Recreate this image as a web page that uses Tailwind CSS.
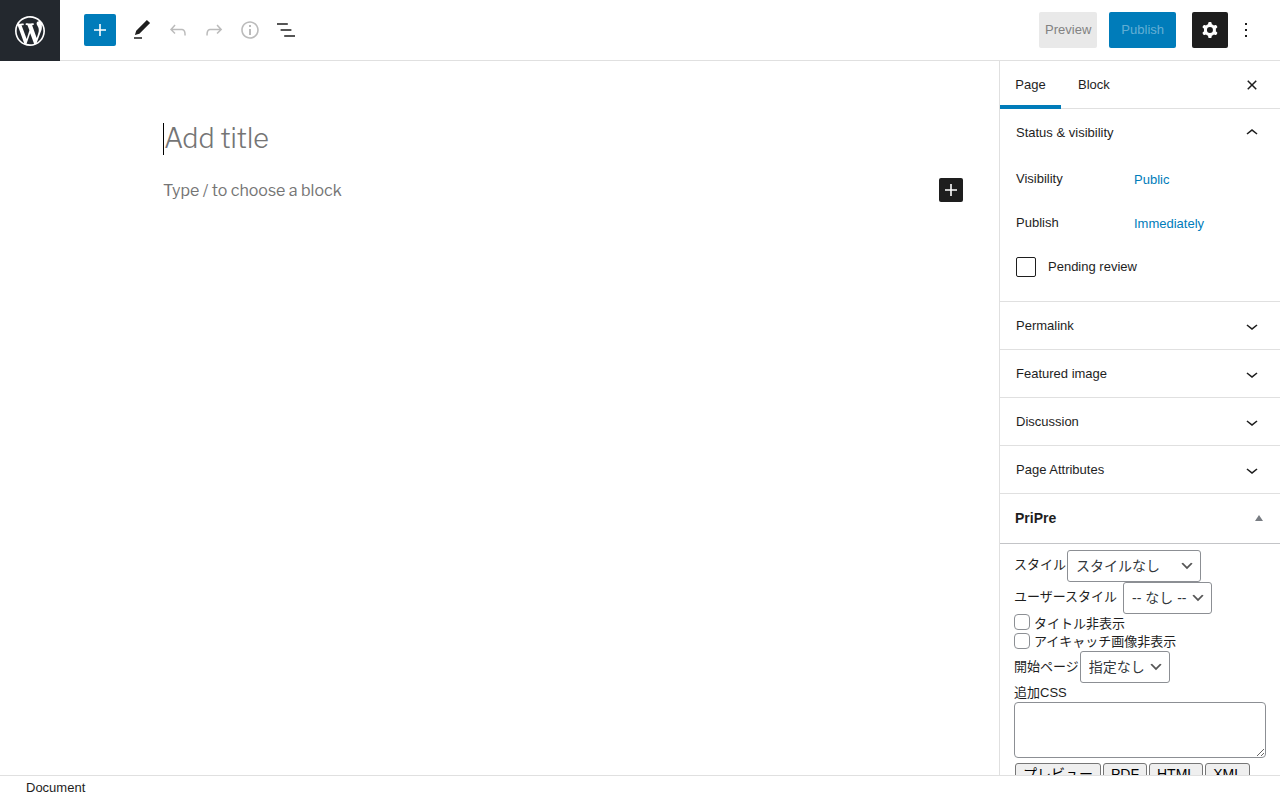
<!DOCTYPE html>
<html lang="en">
<head>
    <meta charset="UTF-8">
    <meta name="viewport" content="width=device-width, initial-scale=1.0">
    <title>Add New Page - WordPress</title>
    <script src="https://cdn.jsdelivr.net/npm/@tailwindcss/browser@4"></script>
</head>
<body class="flex flex-col h-screen overflow-hidden bg-white text-[#1e1e1e] text-[13px] leading-5 font-['Liberation_Sans','Noto_Sans_CJK_JP',sans-serif]">
    <!-- Header toolbar -->
    <header class="flex shrink-0 items-start justify-between border-b border-[#e0e0e0]">
        <div class="flex items-start">
            <a href="#" aria-label="View Pages" class="flex items-center justify-center w-[60px] h-[61px] -mb-px bg-[#23282e] text-white">
                <svg class="size-9" viewBox="-2 -2 24 24" fill="currentColor"><path d="M20 10c0-5.51-4.49-10-10-10C4.48 0 0 4.49 0 10c0 5.52 4.48 10 10 10 5.51 0 10-4.48 10-10zM7.78 15.37L4.37 6.22c.55-.02 1.17-.08 1.17-.08.5-.06.44-1.13-.06-1.11 0 0-1.45.11-2.37.11-.18 0-.37 0-.58-.01C4.12 2.69 6.87 1.11 10 1.11c2.33 0 4.45.87 6.05 2.34-.68-.11-1.65.39-1.65 1.58 0 .74.45 1.36.9 2.1.35.61.55 1.36.55 2.46 0 1.49-1.4 5-1.4 5l-3.03-8.37c.54-.02.82-.17.82-.17.5-.05.44-1.25-.06-1.22 0 0-1.44.12-2.38.12-.87 0-2.33-.12-2.33-.12-.5-.03-.56 1.2-.06 1.22l.92.08 1.26 3.41zM17.41 10c.24-.64.74-1.87.43-4.25.7 1.29 1.05 2.71 1.05 4.25 0 3.29-1.73 6.24-4.4 7.78.97-2.59 1.94-5.2 2.92-7.78zM6.1 18.09C3.12 16.65 1.11 13.53 1.11 10c0-1.3.23-2.48.72-3.59C3.25 10.3 4.67 14.2 6.1 18.09zm4.03-6.63l2.58 6.98c-.86.29-1.76.45-2.71.45-.79 0-1.57-.11-2.29-.33.81-2.38 1.62-4.74 2.42-7.1z"/></svg>
            </a>
            <div class="flex items-center h-[60px] pl-6">
                <button type="button" aria-label="Add block" class="flex items-center justify-center size-8 mr-2 rounded-xs bg-[#007cba] text-white">
                    <svg class="size-6" viewBox="0 0 24 24" fill="currentColor"><path d="M18 11.2h-5.2V6h-1.6v5.2H6v1.6h5.2V18h1.6v-5.2H18z"/></svg>
                </button>
                <button type="button" aria-label="Tools" class="flex items-center justify-center size-9">
                    <svg class="size-6" viewBox="0 0 24 24" fill="currentColor"><path d="M20.1 5.1L16.9 2 6.2 12.7l-1.3 4.4 4.5-1.3L20.1 5.1zM4 20.8h8v-1.5H4v1.5z"/></svg>
                </button>
                <button type="button" aria-label="Undo" disabled class="flex items-center justify-center size-9 text-[#1e1e1e]/30">
                    <svg class="size-6" viewBox="0 0 24 24" fill="currentColor"><path d="M18.3 11.7c-.6-.6-1.4-.9-2.3-.9H6.7l2.9-3.3-1.1-1-4.5 5L8.5 16l1-1-2.7-2.7H16c.5 0 .9.2 1.3.5 1 1 1 3.4 1 4.5v.3h1.5v-.2c0-1.5 0-4.3-1.5-5.7z"/></svg>
                </button>
                <button type="button" aria-label="Redo" disabled class="flex items-center justify-center size-9 text-[#1e1e1e]/30">
                    <svg class="size-6" viewBox="0 0 24 24" fill="currentColor"><path d="M15.6 6.5l-1.1 1 2.9 3.3H8c-.9 0-1.7.3-2.3.9-1.4 1.5-1.4 4.2-1.4 5.6v.2h1.5v-.3c0-1.1 0-3.5 1-4.5.3-.3.7-.5 1.3-.5h9.2L14.5 15l1.1 1.1 4.6-4.6-4.6-5z"/></svg>
                </button>
                <button type="button" aria-label="Details" disabled class="flex items-center justify-center size-9 text-[#1e1e1e]/30">
                    <svg class="size-6" viewBox="0 0 24 24" fill="currentColor"><path d="M12 3.2c-4.8 0-8.8 3.9-8.8 8.8 0 4.8 3.9 8.8 8.8 8.8 4.8 0 8.8-3.9 8.8-8.8 0-4.8-4-8.8-8.8-8.8zm0 16c-4 0-7.2-3.3-7.2-7.2C4.8 8 8 4.8 12 4.8s7.2 3.3 7.2 7.2c0 4-3.2 7.2-7.2 7.2zM11 17h2v-6h-2v6zm0-8h2V7h-2v2z"/></svg>
                </button>
                <button type="button" aria-label="List view" class="flex items-center justify-center size-9">
                    <svg class="size-6" viewBox="0 0 24 24" fill="currentColor"><path d="M13.8 5.2H3v1.5h10.8V5.2zm-3.6 12v1.5H21v-1.5H10.2zm7.2-6H6.6v1.5h10.8v-1.5z"/></svg>
                </button>
            </div>
        </div>
        <div class="flex items-center h-[60px] pr-4">
            <button type="button" disabled class="h-9 px-1.5 mr-3 rounded-xs bg-[#e9e9e9] text-[#828282]">Preview</button>
            <button type="button" disabled class="h-9 px-3 mr-4 rounded-xs bg-[#007cba] text-white/40">Publish</button>
            <button type="button" aria-label="Settings" class="flex items-center justify-center size-9 rounded-xs bg-[#1e1e1e] text-white">
                <svg class="size-6" viewBox="0 0 24 24" fill="currentColor"><path fill-rule="evenodd" clip-rule="evenodd" d="M10.289 4.836A1 1 0 0111.275 4h1.306a1 1 0 01.987.836l.244 1.466c.787.26 1.503.679 2.108 1.218l1.393-.522a1 1 0 011.216.437l.653 1.13a1 1 0 01-.23 1.273l-1.148.944a6.025 6.025 0 010 2.435l1.149.946a1 1 0 01.23 1.272l-.653 1.13a1 1 0 01-1.216.437l-1.394-.522c-.605.54-1.32.958-2.108 1.218l-.244 1.466a1 1 0 01-.987.836h-1.306a1 1 0 01-.986-.836l-.244-1.466a5.995 5.995 0 01-2.108-1.218l-1.394.522a1 1 0 01-1.217-.436l-.653-1.131a1 1 0 01.23-1.272l1.149-.946a6.026 6.026 0 010-2.435l-1.148-.944a1 1 0 01-.23-1.272l.653-1.131a1 1 0 011.217-.437l1.393.522a5.994 5.994 0 012.108-1.218l.244-1.466zM14.929 12a3 3 0 11-6 0 3 3 0 016 0z"/></svg>
            </button>
            <button type="button" aria-label="Options" class="flex items-center justify-center size-9">
                <svg class="size-6" viewBox="0 0 24 24" fill="currentColor"><path d="M13 19h-2v-2h2v2zm0-6h-2v-2h2v2zm0-6h-2V5h2v2z"/></svg>
            </button>
        </div>
    </header>

    <div class="flex flex-1 min-h-0">
        <!-- Editor canvas -->
        <main class="flex-1 min-w-0 pt-[60px] pl-[163px] pr-9 font-['Libre_Franklin','Open_Sans',sans-serif] text-[#757575]">
            <h1 class="flex items-center font-light text-[27px] leading-9">
                <span class="w-px h-8 bg-black"></span>Add title
            </h1>
            <div class="flex items-center justify-between mt-5">
                <p class="pt-0.5 text-[16px] leading-6">Type / to choose a block</p>
                <button type="button" aria-label="Add block" class="flex items-center justify-center size-6 rounded-xs bg-[#1e1e1e] text-white">
                    <svg class="size-6" viewBox="0 0 24 24" fill="currentColor"><path d="M18 11.2h-5.2V6h-1.6v5.2H6v1.6h5.2V18h1.6v-5.2H18z"/></svg>
                </button>
            </div>
        </main>

        <!-- Settings sidebar -->
        <aside class="w-[281px] shrink-0 overflow-hidden border-l border-[#e0e0e0]">
            <div class="flex items-center h-12 pr-4 border-b border-[#e0e0e0]">
                <button type="button" class="w-[61px] h-12 shadow-[inset_0_-4px_0_#007cba]">Page</button>
                <button type="button" class="h-12 px-[17px]">Block</button>
                <button type="button" aria-label="Close settings" class="ml-auto">
                    <svg class="size-6" viewBox="0 0 24 24" fill="currentColor"><path d="M12 13.06l3.712 3.713 1.061-1.06L13.061 12l3.712-3.712-1.06-1.06L12 10.938 8.288 7.227l-1.061 1.06L10.939 12l-3.712 3.712 1.06 1.061L12 13.061z"/></svg>
                </button>
            </div>

            <section class="border-b border-[#e0e0e0]">
                <button type="button" class="flex items-center justify-between w-full h-12 px-4">
                    Status &amp; visibility
                    <svg class="size-6" viewBox="0 0 24 24" fill="currentColor"><path d="M6.5 12.4L12 8l5.5 4.4-.9 1.2L12 10l-4.5 3.6-1-1.2z"/></svg>
                </button>
                <div class="flex items-center h-11 px-4">
                    <span class="w-[118px]">Visibility</span>
                    <button type="button" class="pt-0.5 text-[#007cba]">Public</button>
                </div>
                <div class="flex items-center h-11 px-4">
                    <span class="w-[118px]">Publish</span>
                    <a href="#" class="pt-0.5 text-[#007cba]">Immediately</a>
                </div>
                <label class="flex items-center h-11 px-4 mb-3">
                    <input type="checkbox" class="appearance-none size-5 mr-3 rounded-xs border border-[#1e1e1e]">
                    Pending review
                </label>
            </section>

            <button type="button" class="flex items-center justify-between w-full h-12 px-4 border-b border-[#e0e0e0]">
                Permalink
                <svg class="size-6" viewBox="0 0 24 24" fill="currentColor"><path d="M17.5 11.6L12 16l-5.5-4.4.9-1.2L12 14l4.5-3.6 1 1.2z"/></svg>
            </button>
            <button type="button" class="flex items-center justify-between w-full h-12 px-4 border-b border-[#e0e0e0]">
                Featured image
                <svg class="size-6" viewBox="0 0 24 24" fill="currentColor"><path d="M17.5 11.6L12 16l-5.5-4.4.9-1.2L12 14l4.5-3.6 1 1.2z"/></svg>
            </button>
            <button type="button" class="flex items-center justify-between w-full h-12 px-4 border-b border-[#e0e0e0]">
                Discussion
                <svg class="size-6" viewBox="0 0 24 24" fill="currentColor"><path d="M17.5 11.6L12 16l-5.5-4.4.9-1.2L12 14l4.5-3.6 1 1.2z"/></svg>
            </button>
            <button type="button" class="flex items-center justify-between w-full h-12 px-4 border-b border-[#e0e0e0]">
                Page Attributes
                <svg class="size-6" viewBox="0 0 24 24" fill="currentColor"><path d="M17.5 11.6L12 16l-5.5-4.4.9-1.2L12 14l4.5-3.6 1 1.2z"/></svg>
            </button>

            <!-- PriPre meta box -->
            <button type="button" class="flex items-center justify-between w-full h-[50px] pl-[15px] pr-4 pb-0.5 border-b border-[#c3c4c7] text-sm font-bold">
                PriPre
                <svg class="w-[10px] h-[6px] text-[#787c82]" viewBox="0 0 10 6" fill="currentColor"><path d="M5 0l4 6H1z"/></svg>
            </button>
            <div class="px-[14px] pt-1.5">
                <div class="flex items-center">
                    <label for="style" class="pr-px pb-0.5">スタイル</label>
                    <div class="relative">
                        <select id="style" class="appearance-none w-[134px] h-8 pl-2 pr-6 rounded-[3px] border border-[#8c8f94] bg-white text-sm text-[#32373c]">
                            <option>スタイルなし</option>
                        </select>
                        <svg class="absolute right-1.5 top-2 size-4 text-[#555] pointer-events-none" viewBox="0 0 20 20" fill="currentColor"><path d="M5 6l5 5 5-5 2 1-7 7-7-7 2-1z"/></svg>
                    </div>
                </div>
                <div class="flex items-center">
                    <label for="user-style" class="pr-1.5 pb-0.5">ユーザースタイル</label>
                    <div class="relative">
                        <select id="user-style" class="appearance-none w-[89px] h-8 pl-2 pr-6 rounded-[3px] border border-[#8c8f94] bg-white text-sm text-[#32373c]">
                            <option>-- なし --</option>
                        </select>
                        <svg class="absolute right-1.5 top-2 size-4 text-[#555] pointer-events-none" viewBox="0 0 20 20" fill="currentColor"><path d="M5 6l5 5 5-5 2 1-7 7-7-7 2-1z"/></svg>
                    </div>
                </div>
                <label class="flex h-[19px] items-start">
                    <input type="checkbox" class="appearance-none size-4 mr-1 rounded-[4px] border border-[#8c8f94] bg-white">
                    タイトル非表示
                </label>
                <label class="flex h-[18px] items-start leading-[18px]">
                    <input type="checkbox" class="appearance-none size-4 mr-1 rounded-[4px] border border-[#8c8f94] bg-white">
                    アイキャッチ画像非表示
                </label>
                <div class="flex items-center">
                    <label for="start-page" class="pr-px">開始ページ</label>
                    <div class="relative">
                        <select id="start-page" class="appearance-none w-[90px] h-8 pl-2 pr-6 rounded-[3px] border border-[#8c8f94] bg-white text-sm text-[#32373c]">
                            <option>指定なし</option>
                        </select>
                        <svg class="absolute right-1.5 top-2 size-4 text-[#555] pointer-events-none" viewBox="0 0 20 20" fill="currentColor"><path d="M5 6l5 5 5-5 2 1-7 7-7-7 2-1z"/></svg>
                    </div>
                </div>
                <label for="extra-css" class="block leading-[19px]">追加CSS</label>
                <textarea id="extra-css" class="block w-full h-14 rounded-[4px] border border-[#8c8f94] bg-white"></textarea>
                <div class="flex items-baseline gap-0.5 pl-px pt-[5px] text-sm text-black">
                    <button type="button" class="px-[7px] rounded-[3px] border border-[#767676] bg-[#efefef]">プレビュー</button>
                    <button type="button" class="px-[7px] rounded-[3px] border border-[#767676] bg-[#efefef]">PDF</button>
                    <button type="button" class="px-[7px] rounded-[3px] border border-[#767676] bg-[#efefef]">HTML</button>
                    <button type="button" class="px-[7px] rounded-[3px] border border-[#767676] bg-[#efefef]">XML</button>
                </div>
            </div>
        </aside>
    </div>

    <!-- Breadcrumb footer -->
    <footer class="flex shrink-0 items-center h-[25px] px-[26px] border-t border-[#e0e0e0]">Document</footer>
</body>
</html>
